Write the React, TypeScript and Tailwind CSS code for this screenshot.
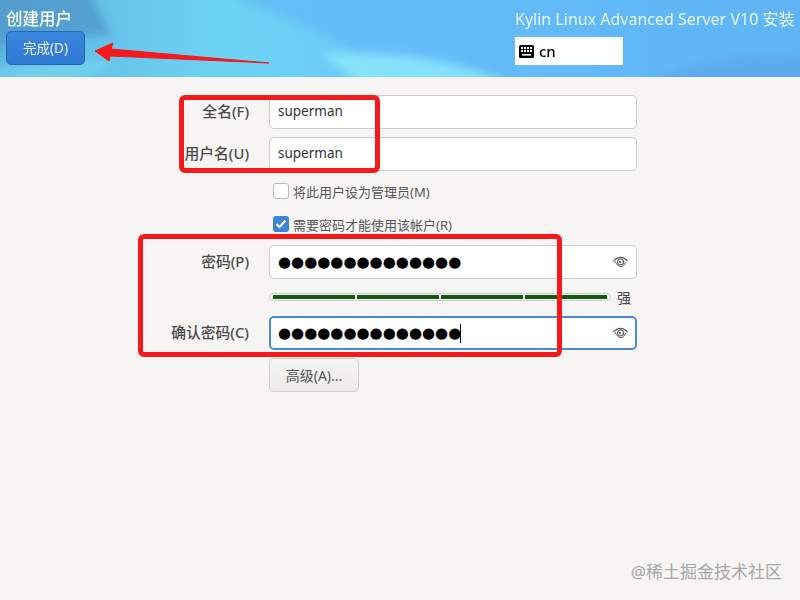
const font = '[font-family:"Noto_Sans","Noto_Sans_CJK_SC",sans-serif]';

function EyeIcon() {
  return (
    <svg width="17" height="13" viewBox="0 0 18 14" fill="none" stroke="#555" className="shrink-0 -mr-[1px]">
      <path d="M1.5 5.5C4 2.5 6.5 1.5 9 1.5s5 1 7.5 4" strokeWidth="1.2" />
      <path d="M3 5.5C5 9.5 7 11.5 9.5 11.5s3.5-1.5 5-5" strokeWidth="1" />
      <circle cx="9" cy="6.5" r="3.2" strokeWidth="1.2" />
      <circle cx="8.5" cy="6.5" r="1.2" fill="#555" stroke="none" />
    </svg>
  );
}

function KeyboardIcon() {
  return (
    <svg width="15" height="13" viewBox="0 0 15 13" className="shrink-0">
      <rect x="0" y="0" width="15" height="13" rx="1.5" fill="#000" />
      <g fill="#fff">
        <rect x="2" y="2" width="2" height="2" />
        <rect x="5" y="2" width="2" height="2" />
        <rect x="8" y="2" width="2" height="2" />
        <rect x="11" y="2" width="2" height="2" />
        <rect x="2" y="5" width="2" height="2" />
        <rect x="5" y="5" width="2" height="2" />
        <rect x="8" y="5" width="2" height="2" />
        <rect x="11" y="5" width="2" height="2" />
        <rect x="3" y="9" width="9" height="1.6" />
      </g>
    </svg>
  );
}

function HeaderArt() {
  return (
    <svg className="absolute inset-0" width="800" height="77" viewBox="0 0 800 77">
      <defs>
        <linearGradient id="sky" x1="0" y1="0" x2="1" y2="0">
          <stop offset="0" stopColor="#5fb6e0" />
          <stop offset="0.28" stopColor="#6dd3f4" />
          <stop offset="0.55" stopColor="#68c6f9" />
          <stop offset="1" stopColor="#5aa9ee" />
        </linearGradient>
        <filter id="soft" x="-10%" y="-30%" width="120%" height="160%">
          <feGaussianBlur stdDeviation="5" />
        </filter>
      </defs>
      <rect width="800" height="77" fill="url(#sky)" />
      <g filter="url(#soft)">
        <path d="M-10 -10H88L112 36C70 34 30 38 -10 46Z" fill="#4f94c8" opacity="0.75" />
        <path d="M215 -10H810V90H400C350 40 280 15 215 -10Z" fill="#62b8f7" opacity="0.75" />
        <path d="M640 90C680 62 740 52 810 60V90Z" fill="#5aa2e8" opacity="0.6" />
        <path d="M320 54C400 50 470 62 520 90H370Z" fill="#8ce8fb" opacity="0.85" />
        <path d="M-10 70C40 60 80 58 120 62L60 90H-10Z" fill="#76d6ef" opacity="0.7" />
      </g>
    </svg>
  );
}

function FieldLabel({ children }: { children: React.ReactNode }) {
  return <div className="pb-[2px] text-right text-[14.8px] font-medium text-[#4a4a4a] whitespace-nowrap">{children}</div>;
}

function TextField({ value }: { value: string }) {
  return (
    <div className="h-[34px] rounded-[5px] border border-[#cfcdca] bg-white px-2 pb-[1px] flex items-center text-[13.5px] text-[#2e3436]">
      {value}
    </div>
  );
}

function PasswordField({ focused }: { focused?: boolean }) {
  return (
    <div
      className={
        focused
          ? 'h-[34px] rounded-[5px] border-2 border-[#4a8bd0] bg-white pl-[7px] pr-[7px] flex items-center justify-between'
          : 'h-[34px] rounded-[5px] border border-[#cfcdca] bg-white pl-2 pr-2 flex items-center justify-between'
      }
    >
      <div className="flex items-center">
        <span className='[font-family:"DejaVu_Sans",sans-serif] text-[15px] leading-none text-black'>●●●●●●●●●●●●●●</span>
        {focused && <span className="-ml-[1px] w-px h-[19px] bg-black" />}
      </div>
      <EyeIcon />
    </div>
  );
}

function CheckRow({ checked, label }: { checked?: boolean; label: string }) {
  return (
    <div className="flex items-center gap-[4px] pl-[4px] h-4 text-[13px] text-[#555]">
      {checked ? (
        <span className="w-4 h-4 rounded-[3px] bg-[#3f83d6] flex items-center justify-center">
          <svg width="12" height="10" viewBox="0 0 12 10" fill="none" stroke="#fff" strokeWidth="2.2">
            <path d="M1.5 5l3 3 6-6.5" />
          </svg>
        </span>
      ) : (
        <span className="w-4 h-4 rounded-[3px] border border-[#bdbbb8] bg-white" />
      )}
      <span className="mt-[3px]">{label}</span>
    </div>
  );
}

export default function App() {
  return (
    <div className={`relative w-[800px] h-[600px] overflow-hidden bg-[#f6f5f4] ${font}`}>
      <header className="relative h-[77px] px-[6px] flex justify-between">
        <HeaderArt />
        <div className="relative flex flex-col pt-[10px]">
          <div className="text-[16.5px] leading-[18px] font-medium text-white">创建用户</div>
          <button className="mt-[3px] w-[79px] h-[34px] rounded-[5px] border border-[#2a66b0] bg-gradient-to-b from-[#3a86de] to-[#2f78d2] text-[13.5px] text-[#e8f1fb]">
            完成(D)
          </button>
        </div>
        <div className="relative w-[279px] pt-[9px]">
          <div className="text-[16px] leading-[20px] text-[#e6f6fd] whitespace-nowrap">Kylin Linux Advanced Server V10 安装</div>
          <div className="mt-[8px] w-[108px] h-[28px] bg-white flex items-center gap-[5px] pl-[4px] text-[15px] font-medium text-black">
            <KeyboardIcon />
            <span>cn</span>
          </div>
        </div>
      </header>

      <main className="pt-[18px] pl-[160px]">
        <div className="grid grid-cols-[89px_368px] gap-x-[20px] items-center">
          <FieldLabel>全名(F)</FieldLabel>
          <TextField value="superman" />

          <div className="h-2 col-span-2" />

          <FieldLabel>用户名(U)</FieldLabel>
          <TextField value="superman" />

          <div className="h-3 col-span-2" />

          <div />
          <CheckRow label="将此用户设为管理员(M)" />

          <div className="h-[17px] col-span-2" />

          <div />
          <CheckRow checked label="需要密码才能使用该帐户(R)" />

          <div className="h-[13px] col-span-2" />

          <FieldLabel>密码(P)</FieldLabel>
          <PasswordField />

          <div className="h-[14px] col-span-2" />

          <div />
          <div className="flex items-center h-2">
            <div className="w-[342px] h-2 rounded-full border border-[#cfcdca] bg-white px-[3px] flex items-center gap-[2px]">
              <span className="flex-1 h-[4px] bg-[#0f5c0f]" />
              <span className="flex-1 h-[4px] bg-[#0f5c0f]" />
              <span className="flex-1 h-[4px] bg-[#0f5c0f]" />
              <span className="flex-1 h-[4px] bg-[#0f5c0f]" />
            </div>
            <span className="ml-[6px] mt-[2px] text-[14px] leading-[8px] text-[#444]">强</span>
          </div>

          <div className="h-[15px] col-span-2" />

          <FieldLabel>确认密码(C)</FieldLabel>
          <PasswordField focused />

          <div className="h-2 col-span-2" />

          <div />
          <button className="w-[90px] h-[34px] rounded-[5px] border border-[#cfcdca] bg-gradient-to-b from-[#f6f5f4] to-[#ecebe9] text-[14px] text-[#555]">
            高级(A)...
          </button>
        </div>
      </main>

      {/* red annotations */}
      <div className="absolute left-[179px] top-[95px] w-[201px] h-[78px] rounded-[6px] border-[5px] border-[#f5191c]" />
      <div className="absolute left-[138px] top-[234px] w-[424px] h-[123px] rounded-[6px] border-[5px] border-[#f5191c]" />
      <svg className="absolute left-[90px] top-[40px]" width="182" height="26" viewBox="0 0 182 26">
        <path d="M5 11L23 3L21 9L179 23L20 16L19 21Z" fill="#f5191c" stroke="#f5191c" strokeWidth="1" />
      </svg>

      <div className="absolute right-[18px] top-[561px] text-[17px] leading-[22px] text-[#a6a6a6]">@稀土掘金技术社区</div>
    </div>
  );
}
